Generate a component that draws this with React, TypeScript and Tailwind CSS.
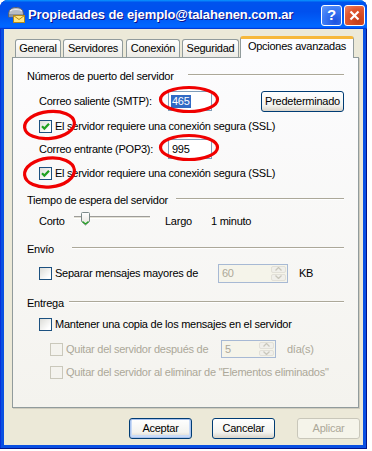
import React from "react";

// Ventana de propiedades de cuenta, estilo Windows XP (Luna)

function CheckBox({ checked = false, disabled = false }: { checked?: boolean; disabled?: boolean }) {
  return (
    <span
      className={`flex h-[13px] w-[13px] shrink-0 items-center justify-center border ${
        disabled
          ? "border-[#CAC8BB] bg-[#F4F3EE]"
          : "border-[#1C5180] bg-[linear-gradient(135deg,#DCDCD7,#FFFFFF_80%)]"
      }`}
    >
      {checked && (
        <svg width="9" height="9" viewBox="0 0 9 9">
          <path d="M1 4.2 L3.4 6.6 L8 1.8" fill="none" stroke="#21A121" strokeWidth="2.2" />
        </svg>
      )}
    </span>
  );
}

function SpinBox({ value, className }: { value: string; className: string }) {
  return (
    <div className={`flex items-stretch border border-[#A7B9D4] bg-[#F5F4EA] ${className}`}>
      <span className="flex flex-1 items-center pl-[3px] text-[#ACA899]">{value}</span>
      <div className="m-[1px] flex w-[15px] flex-col gap-[1px]">
        <div className="flex flex-1 items-center justify-center rounded-[2px] border border-[#E2E0D8] bg-[#F0EFEA]">
          <svg width="7" height="4" viewBox="0 0 7 4">
            <path d="M0.5 3.5 L3.5 0.5 L6.5 3.5" fill="none" stroke="#C9C7BC" strokeWidth="1.3" />
          </svg>
        </div>
        <div className="flex flex-1 items-center justify-center rounded-[2px] border border-[#E2E0D8] bg-[#F0EFEA]">
          <svg width="7" height="4" viewBox="0 0 7 4">
            <path d="M0.5 0.5 L3.5 3.5 L6.5 0.5" fill="none" stroke="#C9C7BC" strokeWidth="1.3" />
          </svg>
        </div>
      </div>
    </div>
  );
}

function GroupHeader({ label, labelWidth, className }: { label: string; labelWidth: string; className: string }) {
  return (
    <div className={`flex h-[16px] items-center ${className}`}>
      <span className={`shrink-0 ${labelWidth}`}>{label}</span>
      <div className="mt-[-3px] flex-1 border-t border-b border-t-[#ACA899] border-b-white" />
    </div>
  );
}

function Tab({ label, className }: { label: string; className: string }) {
  return (
    <div
      className={`flex h-[18px] items-center justify-center rounded-t-[3px] border border-b-0 border-[#919B9C] bg-[linear-gradient(#FFFFFF,#ECEBE6)] ${className}`}
    >
      {label}
    </div>
  );
}

function TitleIcon() {
  return (
    <svg width="18" height="17" viewBox="0 0 18 17">
      <path d="M1.5 9 C1.5 3 5 1.5 9 1.5 C13 1.5 16.5 3 16.5 9 L16.5 11 L1.5 11 Z" fill="#B8BCC4" stroke="#5A6272" />
      <path d="M3 5 C5 3 13 3 15 5" fill="none" stroke="#E8EAEE" strokeWidth="1.2" />
      <rect x="2" y="8" width="14" height="2.5" fill="#8C93A0" />
      <rect x="6.5" y="9.5" width="11" height="7" fill="#FFE680" stroke="#B28A1C" />
      <path d="M6.5 9.5 L12 13.5 L17.5 9.5" fill="none" stroke="#B28A1C" />
    </svg>
  );
}

export default function App() {
  return (
    <div className="min-h-screen bg-white font-['Liberation_Sans',Arial,sans-serif] text-[11px] tracking-[-0.25px] text-black">
      <div className="relative flex h-[449px] w-[367px] flex-col overflow-hidden rounded-t-[8px] bg-[#0A50E2] shadow-[inset_-1px_-1px_#00138C,inset_1px_0_#0831D9]">
        {/* barra de título */}
        <div className="flex h-[29px] shrink-0 items-center bg-[linear-gradient(180deg,#0997FF,#0053EE_8%,#0050EE_40%,#0066FF_88%,#0066FF_93%,#005BFF_95%,#003DD7_96%,#003DD7)] pl-[7px]">
          <TitleIcon />
          <span className="ml-[3px] text-[13px] font-bold tracking-[-0.1px] text-white [text-shadow:1px_1px_0_#0F1089]">
            Propiedades de ejemplo@talahenen.com.ar
          </span>
          <div className="ml-auto mr-[2px] flex gap-[2px] self-start pt-[5px]">
            <div className="flex h-[21px] w-[21px] items-center justify-center rounded-[3px] border border-white bg-[radial-gradient(circle_at_70%_80%,#1D52E0,#3C7BF5_60%,#6A9CF9)] text-[15px] font-bold text-white">
              ?
            </div>
            <div className="flex h-[21px] w-[21px] items-center justify-center rounded-[3px] border border-white bg-[radial-gradient(circle_at_70%_80%,#C43D18,#E0562F_60%,#F08769)]">
              <svg width="11" height="11" viewBox="0 0 11 11">
                <path d="M1.5 1.5 L9.5 9.5 M9.5 1.5 L1.5 9.5" stroke="white" strokeWidth="2.2" />
              </svg>
            </div>
          </div>
        </div>

        {/* cuerpo */}
        <div className="mx-[4px] mb-[4px] flex flex-1 flex-col bg-[#ECE9D8] pl-[8px] pt-[7px]">
          <div className="flex h-[21px] w-[347px] items-end">
            <Tab label="General" className="ml-[3px] w-[46px]" />
            <Tab label="Servidores" className="ml-[2px] w-[60px]" />
            <Tab label="Conexión" className="ml-[3px] w-[54px]" />
            <Tab label="Seguridad" className="ml-[2px] w-[57px]" />
            <div className="relative z-10 mb-[-1px] ml-[1px] flex h-[22px] w-[114px] justify-center rounded-t-[3px] border-x border-t-[3px] border-x-[#919B9C] border-t-[#F7B83A] bg-[#FCFCFE] pt-[1px] leading-[13px]">
              Opciones avanzadas
            </div>
          </div>

          {/* panel */}
          <div className="flex h-[351px] w-[347px] flex-col border border-[#919B9C] bg-[linear-gradient(#FCFCFE,#F4F3EE)] px-[14px] pt-[10px] shadow-[1px_1px_#D0CDBF]">
            <GroupHeader label="Números de puerto del servidor" labelWidth="w-[161px]" className="" />

            <div className="ml-[12px] mt-[6px] flex h-[22px] items-center">
              <span className="w-[129px] shrink-0">Correo saliente (SMTP):</span>
              <div className="flex h-[20px] w-[44px] items-center border border-[#7F9DB9] bg-white pl-[2px]">
                <span className="bg-[#316AC5] px-[1px] leading-[13px] text-white">465</span>
              </div>
              <button className="ml-[49px] h-[21px] w-[83px] rounded-[3px] border border-[#003C74] bg-[linear-gradient(#FFFFFF,#F3F3EF_70%,#D8D3C9)] tracking-[-0.25px]">
                Predeterminado
              </button>
            </div>

            <div className="ml-[12px] mt-[6px] flex h-[17px] items-center gap-[3px]">
              <CheckBox checked />
              <span>El servidor requiere una conexión segura (SSL)</span>
            </div>

            <div className="ml-[12px] mt-[3px] flex h-[22px] items-center">
              <span className="w-[129px] shrink-0">Correo entrante (POP3):</span>
              <div className="flex h-[20px] w-[44px] items-center border border-[#7F9DB9] bg-white pl-[3px]">
                995
              </div>
            </div>

            <div className="ml-[12px] mt-[5px] flex h-[17px] items-center gap-[3px]">
              <CheckBox checked />
              <span>El servidor requiere una conexión segura (SSL)</span>
            </div>

            <GroupHeader label="Tiempo de espera del servidor" labelWidth="w-[149px]" className="mt-[10px]" />

            <div className="ml-[12px] mt-[3px] flex h-[20px] items-center">
              <span className="w-[35px] shrink-0">Corto</span>
              <div className="relative h-[20px] w-[76px]">
                <div className="mt-[5px] h-[3px] border-t border-b border-t-[#9D9C99] border-b-white bg-[#E3E1D6]" />
                <svg className="absolute left-[7px] top-[1px]" width="9" height="14" viewBox="0 0 9 14">
                  <defs>
                    <linearGradient id="thumb" x1="0" x2="0" y1="0" y2="1">
                      <stop offset="0" stopColor="#FFFFFF" />
                      <stop offset="1" stopColor="#E6E4DC" />
                    </linearGradient>
                  </defs>
                  <path d="M0.5 1.5 Q0.5 0.5 1.5 0.5 L7.5 0.5 Q8.5 0.5 8.5 1.5 L8.5 9.5 L4.5 13 L0.5 9.5 Z" fill="url(#thumb)" stroke="#7B8A8A" />
                  <path d="M1.5 9.5 L4.5 12 L7.5 9.5" fill="none" stroke="#21A121" strokeWidth="1.2" />
                </svg>
              </div>
              <span className="ml-[15px] w-[46px] shrink-0">Largo</span>
              <span>1 minuto</span>
            </div>

            <GroupHeader label="Envío" labelWidth="w-[45px]" className="mt-[10px]" />

            <div className="ml-[12px] mt-[6px] flex h-[20px] items-center">
              <CheckBox />
              <span className="ml-[3px] w-[163px] shrink-0">Separar mensajes mayores de</span>
              <SpinBox value="60" className="h-[19px] w-[70px]" />
              <span className="ml-[11px]">KB</span>
            </div>

            <GroupHeader label="Entrega" labelWidth="w-[42px]" className="mt-[12px]" />

            <div className="ml-[12px] mt-[5px] flex h-[17px] items-center gap-[3px]">
              <CheckBox />
              <span>Mantener una copia de los mensajes en el servidor</span>
            </div>

            <div className="ml-[23px] mt-[6px] flex h-[20px] items-center text-[#ACA899]">
              <CheckBox disabled />
              <span className="ml-[3px] w-[155px] shrink-0">Quitar del servidor después de</span>
              <SpinBox value="5" className="h-[18px] w-[55px]" />
              <span className="ml-[11px]">día(s)</span>
            </div>

            <div className="ml-[23px] mt-[5px] flex h-[17px] items-center gap-[3px] text-[#ACA899]">
              <CheckBox disabled />
              <span>Quitar del servidor al eliminar de "Elementos eliminados"</span>
            </div>
          </div>

          {/* botones */}
          <div className="mt-[10px] flex h-[21px]">
            <button className="ml-[117px] h-[21px] w-[63px] rounded-[3px] border border-[#003C74] bg-[linear-gradient(#FFFFFF,#F3F3EF_70%,#D8D3C9)] tracking-[-0.25px] shadow-[inset_0_0_0_1px_#A8C2EE,inset_0_-1px_0_2px_#C9DBF7]">
              Aceptar
            </button>
            <button className="ml-[20px] h-[21px] w-[63px] rounded-[3px] border border-[#003C74] bg-[linear-gradient(#FFFFFF,#F3F3EF_70%,#D8D3C9)] tracking-[-0.25px]">
              Cancelar
            </button>
            <button className="ml-[22px] h-[21px] w-[63px] rounded-[3px] border border-[#C9C7BA] bg-[#F5F4EA] tracking-[-0.25px] text-[#ACA899]">
              Aplicar
            </button>
          </div>
        </div>

        {/* marcas rojas sobre la captura */}
        <svg className="pointer-events-none absolute left-0 top-0" width="367" height="449" viewBox="0 0 367 449">
          <g fill="none" stroke="#F00000" strokeWidth="3.2">
            <ellipse cx="189" cy="99.5" rx="28.5" ry="12" />
            <ellipse cx="49.5" cy="125" rx="25" ry="13.5" transform="rotate(-6 49.5 125)" />
            <ellipse cx="189" cy="147.5" rx="28.5" ry="12" />
            <ellipse cx="49.5" cy="172.5" rx="25" ry="14.5" transform="rotate(-6 49.5 172.5)" />
          </g>
        </svg>
      </div>
    </div>
  );
}
